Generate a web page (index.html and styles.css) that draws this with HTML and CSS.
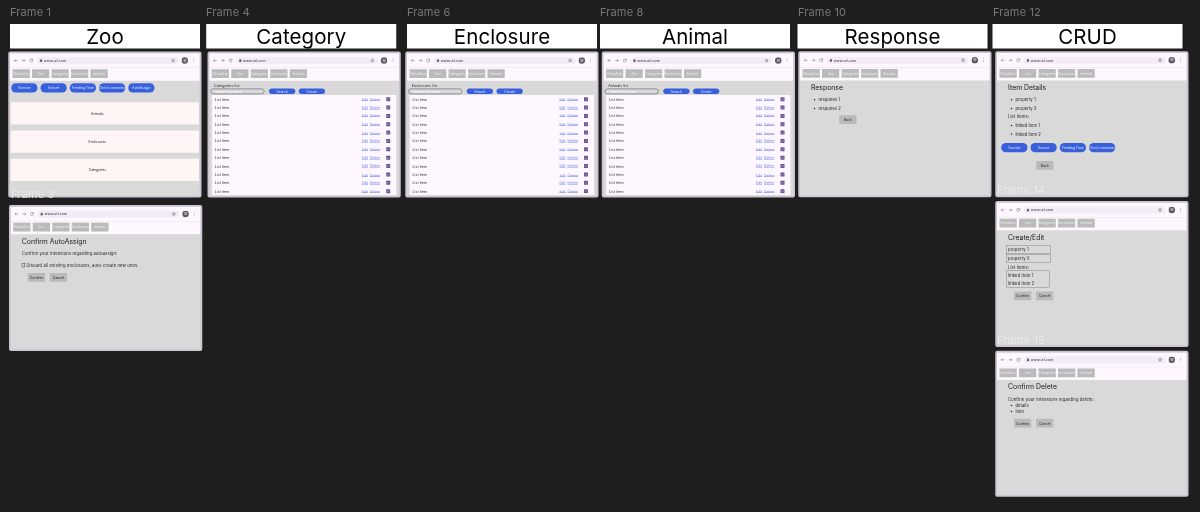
FILE: index.html
```
<!DOCTYPE html>
<html lang="en">
<head>
<meta charset="utf-8">
<title>Zoo wireframes</title>
<link rel="stylesheet" href="styles.css">
</head>
<body>
<svg class="defs" aria-hidden="true">
  <symbol id="back" viewBox="0 0 18 18"><path d="M16 9H3M8 4L3 9l5 5"/></symbol>
  <symbol id="fwd" viewBox="0 0 18 18"><path d="M2 9h13M10 4l5 5-5 5"/></symbol>
  <symbol id="reload" viewBox="0 0 18 18"><path d="M15 6.500A6.500 6.500 0 1 0 15.500 10M15.500 2v5h-5"/></symbol>
  <symbol id="lock" viewBox="0 0 18 18"><path d="M4 8h10v8H4zM6 8V5a3 3 0 0 1 6 0v3" fill="#666"/></symbol>
  <symbol id="star" viewBox="0 0 18 18"><path d="M9 2l2 5 5 .4-4 3.400 1.300 5L9 13l-4.300 2.800 1.300-5-4-3.400L7 7z"/></symbol>
  <symbol id="dots" viewBox="0 0 18 18"><path d="M9 2v2M9 8v2M9 14v2" stroke-width="2.500"/></symbol>
  <symbol id="check" viewBox="0 0 18 18"><path d="M4 9l4 4 7-8" stroke="#fff" stroke-width="2"/></symbol>
</svg>
<div class="viewport"><main class="canvas" id="canvas"></main></div>
<script src="app.js"></script>
</body>
</html>
```
FILE: styles.css
```
* { box-sizing: border-box; }
body {
  margin: 0;
  background: #1e1e1e;
  font-family: Inter, "Liberation Sans", sans-serif;
}
.defs { display: none; }
.viewport { width: 1200px; height: 512px; overflow: hidden; contain: strict; }

/* The board is laid out at 4x and shown zoomed out. */
.canvas {
  position: relative;
  width: 4800px;
  height: 2048px;
  transform: scale(.25);
  transform-origin: 0 0;
}
.label, .title, .frame { position: absolute; }
.label { font-size: 44px; line-height: 52px; letter-spacing: .5px; color: #777; white-space: nowrap; }
.label.over { color: #e9e9e9; }
.title {
  width: 760px;
  height: 98px;
  background: #fff;
  color: #000;
  font-size: 82px;
  line-height: 99px;
  letter-spacing: .3px;
  text-align: center;
}
.frame {
  width: 773px;
  height: 584px;
  border: 7px solid #cbc4d2;
  border-radius: 8px;
  background: #d9d9d9;
  color: #1c1b1f;
  overflow: hidden;
}
.header { height: 110px; background: #fef7ff; }
.toolbar {
  display: flex;
  align-items: center;
  height: 59px;
  padding-left: 14px;
  border-bottom: 2px solid #e9e1ee;
}
.icon { width: 18px; height: 18px; margin-right: 13px; flex: none; fill: none; stroke: #55525a; stroke-width: 1.800; }
.address {
  display: flex;
  align-items: center;
  width: 568px;
  height: 28px;
  padding: 0 14px 0 10px;
  border-radius: 14px;
  background: #f2ecf7;
  font-size: 14px;
  letter-spacing: .3px;
}
.address .icon { width: 14px; height: 14px; margin-right: 4px; }
.address .star { width: 17px; height: 17px; margin: 0 0 0 auto; }
.avatar {
  width: 26px;
  height: 26px;
  margin: 0 13px 0 11px;
  border-radius: 50%;
  background: #5c5961;
  color: #fff;
  font-size: 12px;
  line-height: 26px;
  text-align: center;
}
.nav { display: flex; gap: 9px; padding: 5px 10px; }
.nav span, .button {
  width: 69px;
  height: 35px;
  background: #bababa;
  font-size: 13px;
  line-height: 35px;
  letter-spacing: 0;
  text-align: center;
  white-space: nowrap;
}
.nav span { color: #eee; }
.button { font-size: 14px; }
.pills { display: flex; gap: 12px; padding: 10px 5px 0; }
.pill {
  width: 105px;
  height: 37px;
  border-radius: 19px;
  background: #3860dc;
  color: #dfe6ff;
  font-size: 13.500px;
  line-height: 37px;
  letter-spacing: 0;
  text-align: center;
  white-space: nowrap;
}
.pill.wide { font-size: 12px; }
.cards { display: grid; gap: 24px; padding: 39px 3px 0; }
.card { height: 89px; padding-right: 48px; background: #fff5f5; font-size: 13.500px; line-height: 89px; text-align: center; }
.card { padding-right: 60px; }

.list-name { padding: 10px 19px 3px; font-size: 14.500px; line-height: 18px; letter-spacing: .3px; }
.search { display: flex; gap: 14px; padding-left: 4px; }
.field {
  width: 217px;
  height: 23px;
  margin-right: 4px;
  padding-left: 17px;
  border: 3px solid #77747a;
  border-radius: 12px;
  color: #fff;
  font-size: 14px;
  line-height: 17px;
}
.search .pill { height: 22px; line-height: 22px; }
.rows { margin: 3px 11px 0; background: #fef7ff; }
.row { display: flex; align-items: center; height: 33.45px; padding: 0 24px 0 11px; font-size: 14px; letter-spacing: .3px; }
.links { display: flex; gap: 8px; margin-left: auto; width: 98px; color: #6a80e8; font-size: 13px; text-decoration: underline; }
.row:nth-child(3) .links { transform: translateY(-3px); }
.row:nth-child(5n) .links { transform: translateY(3px); }
.row .icon { width: 16px; height: 16px; margin: 0; border-radius: 2px; background: #65508f; }

.page { display: flex; flex-direction: column; padding: 12px 45px 0 44px; font-size: 16.500px; letter-spacing: .5px; }
.heading { font-size: 27.500px; line-height: 30px; letter-spacing: 0; }
.text { line-height: 20px; margin-top: 26px; }
.items { margin: 0; padding: 0 0 0 30px; line-height: 33.500px; letter-spacing: .2px; }
.items li::marker { font-size: 20px; }
.gap { margin-top: 18px; }
.line { line-height: 33.500px; }
.check-line { display: flex; align-items: center; gap: 6px; letter-spacing: .5px; }
.square { width: 13px; height: 16px; border: 2px solid #444; }
.actions { display: flex; gap: 19px; margin: 21px 0 0 24px; }
.actions.one { margin: 10px 0 0 113px; }
.page .pills { margin-left: -27px; padding: 18px 0 0; }
.page .pills + .one { margin-top: 35px; }
.box { width: 178px; margin-left: -8px; padding-left: 6px; border: 2px solid #858585; line-height: 29px; letter-spacing: .5px; }
.box + .box { margin-top: 3px; }
.box.linked { width: 174px; line-height: 32.500px; }
.caption { line-height: 20px; padding: 8px 0 4px; }
.box.linked + .actions { margin-top: 15px; }
.tight { line-height: 23px; }
.text + .tight { margin-top: 2px; }
.tight + .actions { margin-top: 17px; }
```
FILE: app.js
```
const icon = (id, cls = '') => `<svg class="icon ${cls}"><use href="#${id}"/></svg>`;
const pills = names => `<div class="pills">${names.map(n => `<span class="pill${n.length > 15 ? ' wide' : ''}">${n}</span>`).join('')}</div>`;
const items = (names, cls = '') => `<ul class="items ${cls}">${names.map(n => `<li>${n}</li>`).join('')}</ul>`;
const back = '<div class="actions one"><span class="button">Back</span></div>';
const confirm = '<div class="actions"><span class="button">Confirm</span><span class="button">Cancel</span></div>';
const page = (heading, body) => `<section class="page"><div class="heading">${heading}</div>${body}</section>`;

const header = `<header class="header">
  <div class="toolbar">${icon('back')}${icon('fwd')}${icon('reload')}
    <div class="address">${icon('lock')}www.url.com${icon('star', 'star')}</div>
    <div class="avatar">M</div>${icon('dots')}
  </div>
  <nav class="nav"><span>VirtualZoo</span><span>Zoo</span><span>Categories</span><span>Enclosures</span><span>Animals</span></nav>
</header>`;

const row = `<div class="row">List item<span class="links"><u>Edit</u><u>Delete</u></span>${icon('check')}</div>`;
const list = name => `<div class="list-name">${name} list</div>
  <div class="search"><span class="field">Search by name</span><span class="pill">Search</span><span class="pill">Create</span></div>
  <div class="rows">${row.repeat(12)}</div>`;

const frames = [
  [33, 206, pills(['Sunrise', 'Sunset', 'Feeding Time', 'Check constraints', 'AutoAssign']) +
    '<div class="cards"><div class="card">Animals</div><div class="card">Enclosures</div><div class="card">Categories</div></div>'],
  [36, 820, page('Confirm AutoAssign', `<div class="text">Confirm your intensions regarding autoassign:</div>
    <div class="text check-line"><i class="square"></i>Discard all existing enclosures, auto-create new ones.</div>${confirm}`)],
  [830, 206, list('Categories')],
  [1621, 206, list('Enclosures')],
  [2407, 206, list('Animals')],
  [3193, 205, page('Response', items(['response 1', 'response 2'], 'gap') + back)],
  [3981, 205, page('Item Details', items(['property 1', 'property 2'], 'gap') + '<div class="line">List items:</div>' +
    items(['linked item 1', 'linked item 2']) + pills(['Sunrise', 'Sunset', 'Feeding Time', 'Check constraints']) + back)],
  [3981, 804, page('Create/Edit', `<div class="box gap">property 1</div><div class="box">property 2</div>
    <div class="caption">List items:</div><div class="box linked">linked item 1<br>linked item 2</div>${confirm}`)],
  [3981, 1403, page('Confirm Delete', '<div class="text">Confirm your intensions regarding delete:</div>' +
    items(['details', 'item'], 'tight') + confirm)],
];
const titles = [[40, 'Zoo'], [825, 'Category'], [1628, 'Enclosure'], [2400, 'Animal'], [3190, 'Response'], [3970, 'CRUD']];
const labels = [[40, 23, 1], [824, 23, 4], [1628, 23, 6], [2400, 23, 8], [3192, 23, 10], [3972, 23, 12],
  [44, 750, 3, 'over'], [3988, 734, 14, 'over'], [3988, 1334, 15, 'over']];

document.getElementById('canvas').innerHTML =
  titles.map(([x, t]) => `<div class="title" style="left:${x}px;top:96px">${t}</div>`).join('') +
  frames.map(([x, y, body]) => `<article class="frame" style="left:${x}px;top:${y}px">${header}${body}</article>`).join('') +
  labels.map(([x, y, n, c = '']) => `<div class="label ${c}" style="left:${x}px;top:${y}px">Frame ${n}</div>`).join('');
```
